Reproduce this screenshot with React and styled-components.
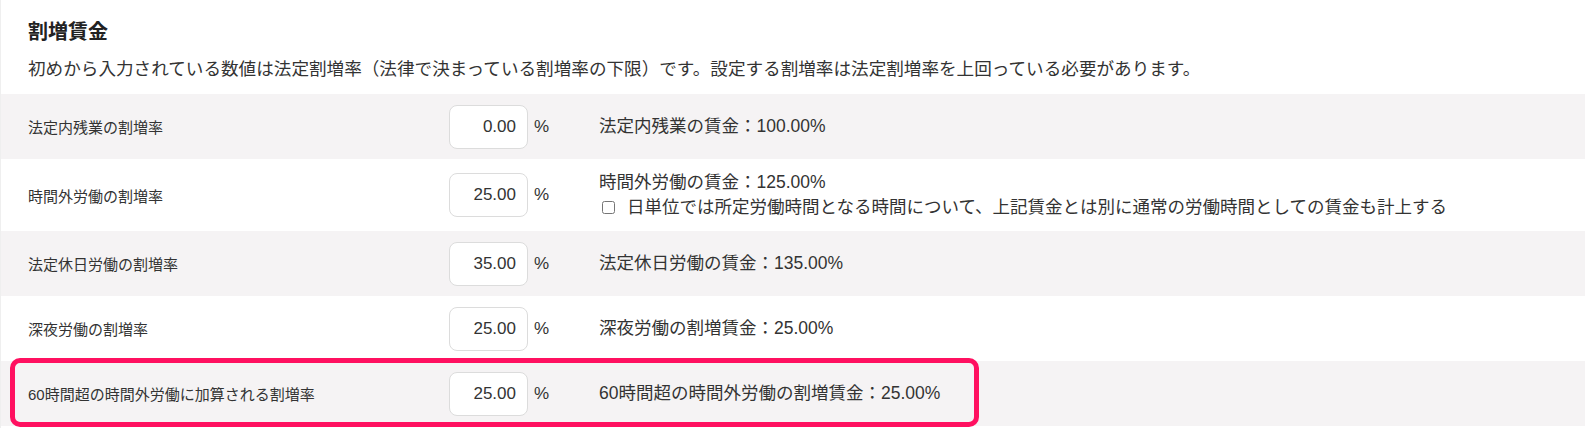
import styled, { createGlobalStyle } from "styled-components";

const GlobalStyle = createGlobalStyle`
    body {
        margin: 0;
        background: #fff;
        color: #333;
        font-family: "Liberation Sans", "Noto Sans CJK JP", sans-serif;
    }
`;

const Section = styled.section`
    width: 100%;
    height: 428px;
    border-left: 1px solid #efefef;
    box-sizing: border-box;
`;

const Header = styled.div`
    padding: 18px 28px 11px 27px;
`;

const Title = styled.h2`
    margin: 0;
    font-size: 20px;
    line-height: 28px;
    font-weight: 700;
    color: #222;
`;

const Note = styled.p`
    margin: 9px 0 0;
    font-size: 17.6px;
    line-height: 28px;
`;

const Row = styled.div`
    position: relative;
    display: flex;
    align-items: center;
    min-height: ${(p) => (p.$tall ? 72 : 65)}px;
    padding-left: 27px;
    box-sizing: border-box;
    background: ${(p) => (p.$shaded ? "#f5f3f4" : "#fff")};
`;

const Label = styled.div`
    width: 421px;
    font-size: 15px;
`;

const RateCell = styled.div`
    width: 150px;
    display: flex;
    align-items: center;
    gap: 6px;
    font-size: 17px;
`;

const RateInput = styled.input`
    width: 79px;
    height: 44px;
    box-sizing: border-box;
    padding: 0 11px 0 6px;
    border: 1px solid #dcdcdc;
    border-radius: 8px;
    background: #fff;
    text-align: right;
    font: inherit;
    color: #333;
    outline: none;
`;

const Result = styled.div`
    font-size: 17.5px;
    line-height: 25px;
`;

const CheckLine = styled.label`
    display: flex;
    align-items: center;
    & > input {
        margin: 0 12px 0 3px;
        width: 13px;
        height: 13px;
    }
`;

const Highlight = styled.div`
    position: absolute;
    top: -3px;
    bottom: -1px;
    left: 9px;
    width: 969px;
    border: 5px solid #ff1060;
    border-radius: 10px;
    box-sizing: border-box;
    pointer-events: none;
`;

const rows = [
    { label: "法定内残業の割増率", value: "0.00", result: "法定内残業の賃金：100.00%" },
    {
        label: "時間外労働の割増率",
        value: "25.00",
        result: "時間外労働の賃金：125.00%",
        check: "日単位では所定労働時間となる時間について、上記賃金とは別に通常の労働時間としての賃金も計上する",
    },
    { label: "法定休日労働の割増率", value: "35.00", result: "法定休日労働の賃金：135.00%" },
    { label: "深夜労働の割増率", value: "25.00", result: "深夜労働の割増賃金：25.00%" },
    {
        label: "60時間超の時間外労働に加算される割増率",
        value: "25.00",
        result: "60時間超の時間外労働の割増賃金：25.00%",
        marked: true,
    },
];

export default function App() {
    return (
        <>
            <GlobalStyle />
            <Section>
                <Header>
                    <Title>割増賃金</Title>
                    <Note>
                        初めから入力されている数値は法定割増率（法律で決まっている割増率の下限）です。設定する割増率は法定割増率を上回っている必要があります。
                    </Note>
                </Header>
                {rows.map((r, i) => (
                    <Row key={r.label} $shaded={i % 2 === 0} $tall={!!r.check}>
                        <Label>{r.label}</Label>
                        <RateCell>
                            <RateInput defaultValue={r.value} />
                            <span>%</span>
                        </RateCell>
                        <Result>
                            <div>{r.result}</div>
                            {r.check && (
                                <CheckLine>
                                    <input type="checkbox" />
                                    {r.check}
                                </CheckLine>
                            )}
                        </Result>
                        {r.marked && <Highlight />}
                    </Row>
                ))}
            </Section>
        </>
    );
}
